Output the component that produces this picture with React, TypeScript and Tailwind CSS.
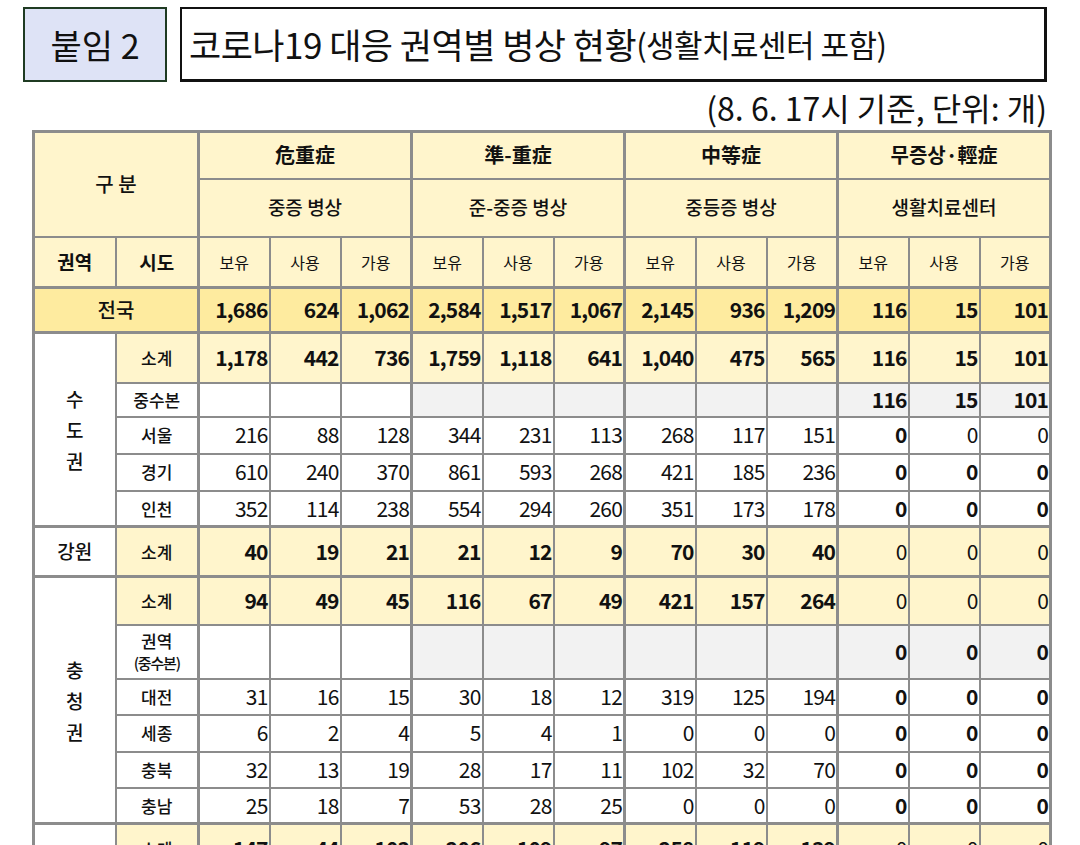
import React from "react"

type Kind = "total" | "sub" | "plain" | "hq"

type Row = {
    region?: { label: string; span: number; vertical?: boolean }
    sido: React.ReactNode
    kind: Kind
    vals: string[]
    h: string
    topThick?: boolean
    allBold?: boolean
}

const rows: Row[] = [
    {
        region: { label: "수도권", span: 5, vertical: true },
        sido: "소계",
        kind: "sub",
        vals: ["1,178", "442", "736", "1,759", "1,118", "641", "1,040", "475", "565", "116", "15", "101"],
        h: "h-[50px]",
        topThick: true,
        allBold: true,
    },
    {
        sido: "중수본",
        kind: "hq",
        vals: ["", "", "", "", "", "", "", "", "", "116", "15", "101"],
        h: "h-[34px]",
    },
    {
        sido: "서울",
        kind: "plain",
        vals: ["216", "88", "128", "344", "231", "113", "268", "117", "151", "0", "0", "0"],
        h: "h-[37px]",
    },
    {
        sido: "경기",
        kind: "plain",
        vals: ["610", "240", "370", "861", "593", "268", "421", "185", "236", "0", "0", "0"],
        h: "h-[37px]",
    },
    {
        sido: "인천",
        kind: "plain",
        vals: ["352", "114", "238", "554", "294", "260", "351", "173", "178", "0", "0", "0"],
        h: "h-[36px]",
    },
    {
        region: { label: "강원", span: 1 },
        sido: "소계",
        kind: "sub",
        vals: ["40", "19", "21", "21", "12", "9", "70", "30", "40", "0", "0", "0"],
        h: "h-[50px]",
        topThick: true,
    },
    {
        region: { label: "충청권", span: 6, vertical: true },
        sido: "소계",
        kind: "sub",
        vals: ["94", "49", "45", "116", "67", "49", "421", "157", "264", "0", "0", "0"],
        h: "h-[48px]",
        topThick: true,
    },
    {
        sido: (
            <span className="flex flex-col items-center leading-[22px]">
                <span>권역</span>
                <span className="text-[15px] tracking-[-0.08em]">(중수본)</span>
            </span>
        ),
        kind: "hq",
        vals: ["", "", "", "", "", "", "", "", "", "0", "0", "0"],
        h: "h-[54px]",
    },
    {
        sido: "대전",
        kind: "plain",
        vals: ["31", "16", "15", "30", "18", "12", "319", "125", "194", "0", "0", "0"],
        h: "h-[36px]",
    },
    {
        sido: "세종",
        kind: "plain",
        vals: ["6", "2", "4", "5", "4", "1", "0", "0", "0", "0", "0", "0"],
        h: "h-[37px]",
    },
    {
        sido: "충북",
        kind: "plain",
        vals: ["32", "13", "19", "28", "17", "11", "102", "32", "70", "0", "0", "0"],
        h: "h-[36px]",
    },
    {
        sido: "충남",
        kind: "plain",
        vals: ["25", "18", "7", "53", "28", "25", "0", "0", "0", "0", "0", "0"],
        h: "h-[36px]",
    },
    {
        region: { label: "", span: 1 },
        sido: "소계",
        kind: "sub",
        vals: ["147", "44", "103", "206", "109", "97", "258", "119", "139", "0", "0", "0"],
        h: "h-[50px]",
        topThick: true,
    },
]

const line = "border-2 border-[#8c8c8c]"
const groupLeft = (i: number) => (i % 3 === 0 ? "border-l-[3px]" : "")

function valueCell(row: Row, v: string, i: number, rowIndex: number) {
    let bg = "bg-white"
    let bold = false
    if (row.kind === "sub") {
        bg = "bg-[#fff5cc]"
        bold = row.allBold || i < 9
    } else if (row.kind === "hq") {
        bg = i < 3 ? "bg-white" : "bg-[#f2f2f2]"
        bold = true
    } else {
        bold = i >= 9
        // 서울 row: only the first 0 is bold
        if (rowIndex === 2 && i > 9) bold = false
    }
    return (
        <td
            key={i}
            className={`${line} ${groupLeft(i)} ${row.topThick ? "border-t-[3px]" : ""} ${bg} ${
                bold ? "font-bold" : "font-normal"
            } pr-[1px] text-right text-[21px] tracking-[-0.04em]`}
        >
            {v}
        </td>
    )
}

export default function App() {
    return (
        <main
            className="min-h-screen w-[1080px] bg-white pt-[7px] text-[#111]"
            style={{ fontFamily: '"Noto Sans CJK KR", "Noto Sans", sans-serif' }}
        >
            <div className="ml-[23px] flex gap-[13px]">
                <div className="flex h-[75px] w-[144px] items-center justify-center border-2 border-[#1f3b22] bg-[#dee3f6] text-[34px]">
                    붙임 2
                </div>
                <div className="flex h-[75px] w-[867px] items-center border-2 border-r-[3px] border-b-[3px] border-[#111] bg-white pl-[7px] text-[35px] tracking-[-0.015em]">
                    코로나19 대응 권역별 병상 현황
                    <span className="text-[31px]">(생활치료센터 포함)</span>
                </div>
            </div>

            <div className="flex h-[48px] w-[1047px] items-center justify-end pt-[2px] text-[32px]">
                (8. 6. 17시 기준, 단위: 개)
            </div>

            <table className="ml-[32px] w-[1018px] table-fixed border-collapse border-[3px] border-[#8c8c8c] text-center">
                <colgroup>
                    <col className="w-[82px]" />
                    <col className="w-[83px]" />
                    {Array.from({ length: 12 }).map((_, i) => (
                        <col key={i} className="w-[71px]" />
                    ))}
                </colgroup>
                <thead>
                    <tr className="bg-[#fff5cc]">
                        <td colSpan={2} rowSpan={2} className={`${line} text-[20px] font-medium`}>
                            구 분
                        </td>
                        {["危重症", "準-重症", "中等症", "무증상·輕症"].map((t) => (
                            <td
                                key={t}
                                colSpan={3}
                                className={`${line} border-l-[3px] h-[47px] text-[20px] font-bold`}
                            >
                                {t}
                            </td>
                        ))}
                    </tr>
                    <tr className="bg-[#fff5cc]">
                        {["중증 병상", "준-중증 병상", "중등증 병상", "생활치료센터"].map((t) => (
                            <td
                                key={t}
                                colSpan={3}
                                className={`${line} border-l-[3px] h-[58px] text-[19px] font-medium`}
                            >
                                {t}
                            </td>
                        ))}
                    </tr>
                    <tr className="bg-[#fff5cc]">
                        <td className={`${line} h-[51px] text-[19px] font-bold`}>권역</td>
                        <td className={`${line} text-[19px] font-bold`}>시도</td>
                        {Array.from({ length: 12 }).map((_, i) => (
                            <td key={i} className={`${line} ${groupLeft(i)} text-[16px]`}>
                                {["보유", "사용", "가용"][i % 3]}
                            </td>
                        ))}
                    </tr>
                </thead>
                <tbody>
                    <tr className="bg-[#feeb9f]">
                        <td
                            colSpan={2}
                            className={`${line} border-t-[3px] h-[45px] text-[20px] font-medium`}
                        >
                            전국
                        </td>
                        {["1,686", "624", "1,062", "2,584", "1,517", "1,067", "2,145", "936", "1,209", "116", "15", "101"].map(
                            (v, i) => (
                                <td
                                    key={i}
                                    className={`${line} ${groupLeft(i)} border-t-[3px] pr-[1px] text-right text-[21px] font-bold tracking-[-0.04em]`}
                                >
                                    {v}
                                </td>
                            ),
                        )}
                    </tr>
                    {rows.map((row, r) => (
                        <tr key={r}>
                            {row.region && (
                                <td
                                    rowSpan={row.region.span}
                                    className={`${line} ${row.topThick ? "border-t-[3px]" : ""} bg-white text-[19px] font-medium`}
                                >
                                    {row.region.vertical ? (
                                        <span className="flex flex-col items-center leading-[31px]">
                                            {row.region.label.split("").map((c) => (
                                                <span key={c}>{c}</span>
                                            ))}
                                        </span>
                                    ) : (
                                        row.region.label
                                    )}
                                </td>
                            )}
                            <td
                                className={`${line} ${row.topThick ? "border-t-[3px]" : ""} ${row.h} ${
                                    row.kind === "sub" ? "bg-[#fff5cc]" : "bg-white"
                                } text-[17px] font-medium`}
                            >
                                {row.sido}
                            </td>
                            {row.vals.map((v, i) => valueCell(row, v, i, r))}
                        </tr>
                    ))}
                </tbody>
            </table>
        </main>
    )
}
